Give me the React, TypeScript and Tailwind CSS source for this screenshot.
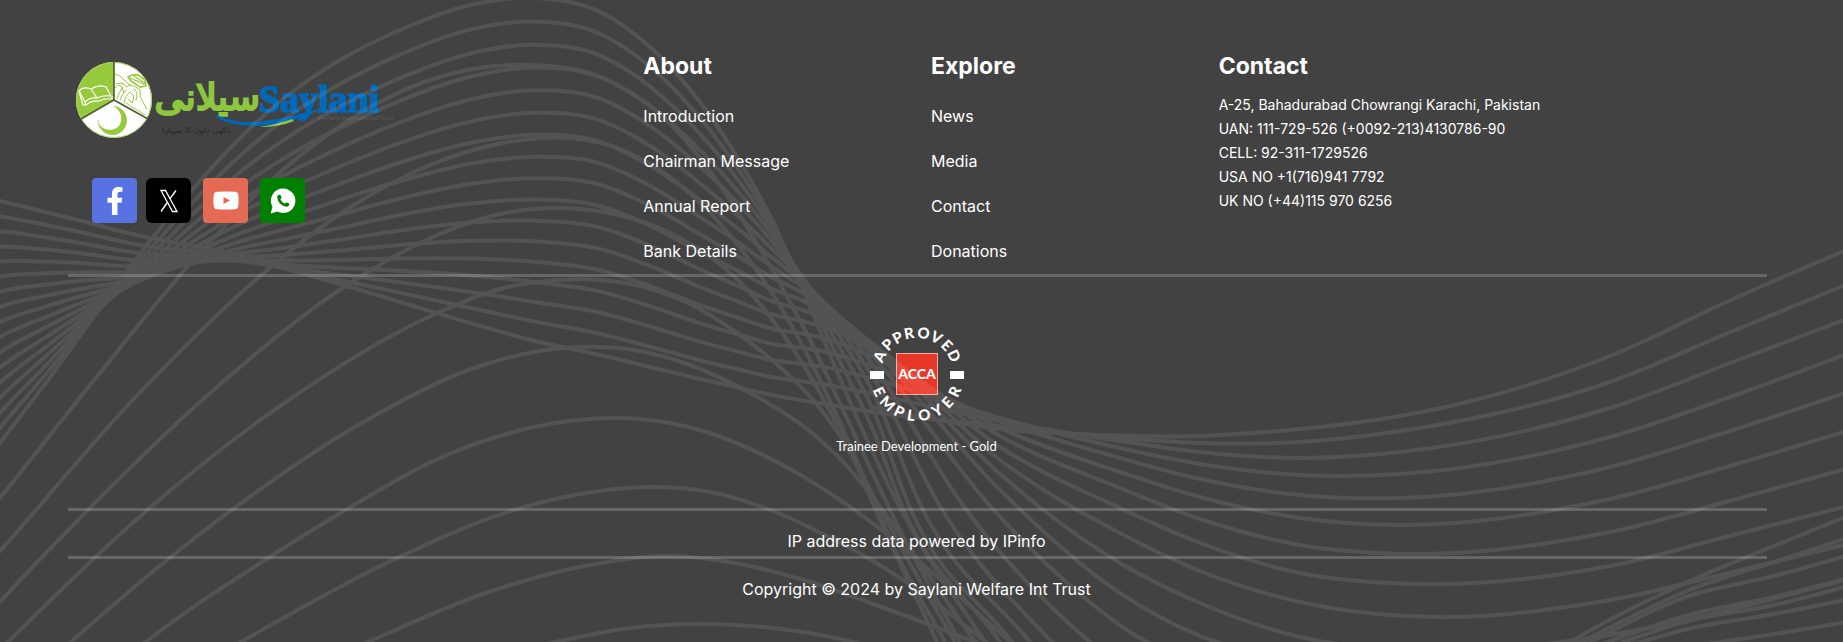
import React from "react";
import { FaFacebookF } from "react-icons/fa";

type Point = [number, number];

/** Smooth path through points ordered by x (cubic Hermite, parabolic slopes). */
function smooth(points: Point[]): string {
  const n = points.length;
  const secant = (i: number) => (points[i + 1][1] - points[i][1]) / (points[i + 1][0] - points[i][0]);
  const slopes = points.map((_, i) => {
    if (i === 0) return secant(0);
    if (i === n - 1) return secant(n - 2);
    const before = points[i][0] - points[i - 1][0];
    const after = points[i + 1][0] - points[i][0];
    return (secant(i - 1) * after + secant(i) * before) / (before + after);
  });
  let d = `M${points[0][0]} ${points[0][1]}`;
  for (let i = 0; i < n - 1; i++) {
    const [x1, y1] = points[i];
    const [x2, y2] = points[i + 1];
    const h = (x2 - x1) / 3;
    d += `C${(x1 + h).toFixed(1)} ${(y1 + slopes[i] * h).toFixed(1)} ${(x2 - h).toFixed(1)} ${(y2 - slopes[i + 1] * h).toFixed(1)} ${x2} ${y2.toFixed(1)}`;
  }
  return d;
}

/** x, value of the first strand, value of the last strand, bulge between them */
const stations: [number, number, number, number][] = [
  [-20, 470, 196, 0],
  [0, 443, 201, 0],
  [45, 384, 212, 35],
  [90, 322, 223, 85],
  [120, 281, 231, 120],
  [150, 241, 238, 148],
  [200, 181, 247, 165],
  [240, 138, 256, 178],
  [283, 99, 268, 185],
  [340, 60, 284, 170],
  [400, 30, 302, 130],
  [470, 5, 323, 80],
  [535, -2, 341, 35],
  [600, 12, 355, 5],
  [650, 47, 367, -5],
  [700, 102, 379, -25],
  [740, 162, 388, -70],
  [772, 220, 395, -120],
  [800, 283, 400, -200],
  [830, 355, 405, -280],
  [873, 453, 412, -350],
];

const tails: Point[][] = [
  [[900, 508], [985, 642], [1010, 680]],
  [[903, 508], [1000, 642], [1025, 680]],
  [[910, 508], [1012, 642], [1040, 680]],
  [[922, 508], [1030, 642], [1060, 680]],
  [[941, 508], [1052, 642], [1090, 680]],
  [[965, 508], [1090, 642], [1140, 680]],
  [[992, 508], [1130, 632], [1200, 670]],
  [[1000, 490], [1120, 593], [1200, 636], [1300, 662]],
  [[1000, 474], [1120, 563], [1200, 603], [1300, 637], [1400, 650], [1500, 648], [1610, 635], [1733, 609], [1860, 576]],
  [[1000, 460], [1120, 533], [1200, 571], [1300, 602], [1440, 617], [1610, 600], [1733, 572], [1860, 541]],
  [[1000, 447], [1120, 508], [1200, 543], [1300, 573], [1420, 584], [1610, 566], [1733, 535], [1860, 503]],
  [[1000, 436], [1120, 488], [1200, 519], [1300, 545], [1410, 554], [1610, 532], [1733, 500], [1860, 465]],
  [[1000, 428], [1120, 472], [1200, 497], [1300, 518], [1400, 525], [1610, 499], [1733, 465], [1860, 427]],
  [[1000, 421], [1120, 458], [1200, 479], [1300, 495], [1400, 498], [1610, 467], [1733, 430], [1860, 388]],
  [[1000, 418], [1120, 448], [1200, 464], [1300, 475], [1400, 474], [1610, 437], [1733, 396], [1860, 349]],
  [[1000, 421], [1120, 441], [1200, 452], [1300, 458], [1400, 452], [1610, 408], [1733, 362], [1860, 314]],
  [[1000, 426], [1120, 438], [1200, 443], [1300, 442], [1400, 431], [1610, 382], [1733, 331], [1860, 279]],
];

const strands: Point[][] = tails.map((tail, i) => {
  const u = i / (tails.length - 1);
  const head = stations.map(([x, a, b, c]): Point => [x, a + (b - a) * u + c * u * (1 - u)]);
  return [...head, ...tail];
});

const loose: Point[][] = [
  [[873, 407], [940, 420], [1000, 429], [1100, 435], [1200, 436], [1300, 429], [1400, 416], [1487, 397], [1610, 356], [1733, 299], [1860, 244]],
  [[-20, 523], [0, 498], [95, 379], [190, 264], [265, 186], [340, 126], [430, 80], [530, 65], [600, 77], [660, 114], [720, 185], [770, 266], [810, 340], [850, 425], [900, 530], [960, 642]],
  [[-20, 573], [0, 551], [130, 403], [265, 272], [340, 214], [430, 165], [514, 141], [570, 138], [620, 149], [679, 184], [738, 245], [780, 306], [820, 380], [860, 468], [895, 550], [945, 642]],
  [[-20, 624], [0, 602], [85, 513], [200, 402], [344, 287], [447, 231], [500, 214], [560, 208], [610, 213], [659, 228], [700, 250], [738, 280], [780, 330], [820, 393], [850, 451], [880, 520], [937, 642]],
  [[-10, 660], [8, 642], [152, 506], [280, 406], [435, 314], [500, 289], [560, 280], [600, 280], [640, 286], [690, 304], [730, 328], [773, 361], [813, 400], [840, 436], [870, 490], [907, 558], [955, 642]],
  [[50, 661], [71, 642], [237, 506], [360, 424], [486, 364], [540, 351], [600, 347], [640, 351], [690, 365], [750, 393], [807, 429], [847, 466], [880, 507], [930, 577], [975, 642]],
  [[130, 655], [146, 642], [265, 560], [344, 511], [440, 458], [534, 427], [590, 419], [640, 419], [700, 430], [773, 460], [840, 500], [880, 529], [935, 575], [1010, 642]],
  [[220, 654], [241, 642], [395, 559], [514, 510], [580, 494], [650, 487], [710, 492], [773, 511], [823, 534], [873, 561], [915, 588], [990, 645]],
  [[340, 654], [368, 642], [480, 595], [580, 567], [670, 556], [735, 563], [807, 581], [873, 604], [957, 635], [1000, 652]],
  [[520, 650], [560, 641], [630, 628], [700, 624], [773, 628], [840, 639], [900, 655]],
  [[1560, 648], [1600, 625], [1692, 580], [1774, 546], [1860, 511]],
  [[1565, 650], [1692, 589], [1774, 562], [1860, 534]],
  [[1570, 652], [1692, 595], [1774, 576], [1860, 552]],
  [[1590, 648], [1692, 614], [1774, 597], [1860, 575]],
  [[1600, 650], [1692, 620], [1774, 605], [1860, 583]],
  [[1620, 648], [1692, 628], [1774, 614], [1860, 597]],
  [[1680, 648], [1774, 634], [1860, 620]],
];

const wavePaths = [...strands, ...loose].map(smooth);

function Waves() {
  return (
    <svg
      className="pointer-events-none absolute inset-0 h-full w-full"
      viewBox="0 0 1843 642"
      preserveAspectRatio="none"
      aria-hidden="true"
    >
      <g fill="none" stroke="#fff" strokeWidth="4" opacity="0.09">
        {wavePaths.map((d, i) => (
          <path key={i} d={d} />
        ))}
      </g>
    </svg>
  );
}

function Logo() {
  return (
    <svg className="block h-[84px] w-[340px]" viewBox="68 58 340 84" role="img" aria-label="Saylani Welfare International Trust">
      <circle cx="114" cy="100" r="38" fill="#fff" />
      <path d="M114 100V62A38 38 0 0 0 81 119Z" fill="#96ca3c" />
      <circle cx="114" cy="100" r="37.5" fill="none" stroke="#a6cf66" />
      <path d="M114 61V100L81 119M114 100L148 119" fill="none" stroke="#4d5a35" strokeWidth="1.6" />
      <g fill="none" stroke="#fff" strokeWidth="1.2" strokeLinejoin="round">
        <path d="M79 91Q83 86 91 89Q99 84 106 87L111 96Q103 95 97 98Q90 97 85 102Z" />
        <path d="M79 91L83 105L86 105Q92 100 99 101Q105 98 112 99V96M85 102L86 105M91 89L97 98" />
      </g>
      <g fill="none" stroke="#96ca3c" strokeWidth="1" strokeLinecap="round">
        <path d="M115 74Q120 75 123 79L130 85L127 87L122 83M115 88Q119 83 122 87L124 93M117 99Q119 92 122 88M120 100Q122 94 126 90M124 103Q125 96 130 92M116 84Q120 82 124 84" />
        <path d="M129 85Q135 85 140 90Q139 98 144 104L147 109M126 103Q131 107 139 111L145 115M131 93Q136 96 132 103L128 99M134 89Q139 93 136 100" />
        <path d="M128 77Q133 74 138 75L145 80L146 86L140 87L131 81Z" strokeDasharray="1 1.4" strokeWidth="1.8" />
        <path d="M130 78L144 84M134 76L145 83" strokeDasharray="1 1.4" strokeWidth="1.4" />
      </g>
      <path d="M113 106A14.500 14.500 0 1 1 98 122A13 13 0 0 0 119 126A13.500 13.500 0 0 0 113 106Z" fill="#96ca3c" />
      <path d="M98 120A14 14 0 0 0 103 131" fill="none" stroke="#b9dd80" />
      <text
        x="260"
        y="110"
        direction="rtl"
        fill="#8dc63f"
        stroke="#8dc63f"
        strokeWidth="2.2"
        fontSize="37"
        fontFamily="'DejaVu Sans', sans-serif"
      >
        سیلانی
      </text>
      <path d="M217 115Q232 123 255 122Q280 120 311 111Q318 109 323 108Q300 121 270 125Q235 128 217 118Z" fill="#0068b8" />
      <path d="M259 127Q278 124 292 119L294 121Q280 127 259 127Z" fill="#8dc63f" />
      <text
        x="259"
        y="112"
        fill="#0068b8"
        stroke="#0068b8"
        strokeWidth="1.6"
        fontSize="38"
        fontWeight="700"
        fontFamily="'Liberation Serif', serif"
      >
        Saylani
      </text>
      <text x="318" y="120" fill="#5c5c5c" fontSize="6" fontFamily="'Open Sans', sans-serif">
        Welfare International Trust
      </text>
      <text x="230" y="133" direction="rtl" fill="#262626" fontSize="8" fontFamily="'DejaVu Sans', sans-serif">
        دکھی دلوں کا سہارا
      </text>
    </svg>
  );
}

function XIcon() {
  return (
    <svg className="h-[24px] w-[20px]" viewBox="0 0 20 24" fill="none" stroke="#fff" aria-hidden="true">
      <path d="M2 1.500H6.500L18 22.500H13.500Z" strokeWidth="1.3" />
      <path d="M17 1.500L10.800 9.800M8.700 13L2 22.500" strokeWidth="1.4" />
    </svg>
  );
}

function YoutubeIcon() {
  return (
    <svg className="h-[19px] w-[26px]" viewBox="0 0 26 19" aria-hidden="true">
      <path d="M4 .8Q13 0 22 .8Q25 1 25.300 4Q25.900 9.500 25.300 15Q25 18 22 18.200Q13 19 4 18.200Q1 18 .7 15Q.1 9.500 .7 4Q1 1 4 .8Z" fill="#fff" />
      <path d="M10.500 6L17 9.500L10.500 13Z" fill="#e46a54" />
    </svg>
  );
}

function WhatsappIcon() {
  return (
    <svg className="size-[26px]" viewBox="0 0 26 26" aria-hidden="true">
      <path d="M13.300 .6A12.200 12.200 0 1 1 7.500 23.600L.6 25.400L2.500 18.800A12.200 12.200 0 0 1 13.300 .6Z" fill="#fff" />
      <path
        transform="translate(6 5.500) scale(.6)"
        d="M13.832 16.568a1 1 0 0 0 1.213-.303l.355-.465A2 2 0 0 1 17 15l3 1a2 2 0 0 1 2 2v1a4 4 0 0 1-4 3A17 17 0 0 1 2 6a4 4 0 0 1 3-4h1a2 2 0 0 1 2 1.500l1 3a2 2 0 0 1-.8 2.100l-.468.351a1 1 0 0 0-.292 1.233 14 14 0 0 0 6.392 6.384Z"
        fill="#008000"
      />
    </svg>
  );
}

const approved: [string, number][] = [
  ["A", -65], ["P", -45], ["P", -28], ["R", -11], ["O", 9], ["V", 28], ["E", 46], ["D", 64],
];
const employer: [string, number][] = [
  ["E", 65], ["M", 45], ["P", 25], ["L", 8], ["O", -10], ["Y", -29], ["E", -47], ["R", -65],
];

function AccaBadge() {
  return (
    <svg className="block h-[100px] w-[100px]" viewBox="-50 -50 100 100" role="img" aria-label="ACCA Approved Employer">
      <g fill="#fff" fontFamily="Lato, sans-serif" fontSize="15" fontWeight="900" textAnchor="middle">
        {approved.map(([letter, angle], i) => (
          <text key={i} y="-36" transform={`rotate(${angle})`}>
            {letter}
          </text>
        ))}
        {employer.map(([letter, angle], i) => (
          <text key={i} y="47" transform={`rotate(${angle})`}>
            {letter}
          </text>
        ))}
      </g>
      <path d="M-47 -3H-33V5H-47ZM33 -3H47V5H33Z" fill="#fff" />
      <rect x="-20.500" y="-20.500" width="41" height="41" fill="#e73827" stroke="#f3a79f" />
      <text y="5" fill="#fff" fontSize="14" fontWeight="900" textAnchor="middle" fontFamily="Lato, sans-serif">
        ACCA
      </text>
    </svg>
  );
}

function LinkColumn({ title, links }: { title: string; links: string[] }) {
  return (
    <nav className="col-span-2 px-3" aria-label={title}>
      <h2 className="text-[23px] leading-8 font-bold">{title}</h2>
      <ul className="mt-[22px]">
        {links.map((label) => (
          <li key={label} className="pb-[21px] leading-6">
            <a href="#">{label}</a>
          </li>
        ))}
      </ul>
    </nav>
  );
}

const contactLines = [
  "A-25, Bahadurabad Chowrangi Karachi, Pakistan",
  "UAN: 111-729-526 (+0092-213)4130786-90",
  "CELL: 92-311-1729526",
  "USA NO +1(716)941 7792",
  "UK NO (+44)115 970 6256",
];

function Rule() {
  return <hr className="mr-[15px] ml-3 h-[3px] border-0 bg-white/20" />;
}

export default function App() {
  return (
    <footer className="relative min-h-screen overflow-hidden bg-[#424242] pt-[50px] pr-[61px] pb-10 pl-14 font-[Inter,sans-serif] text-base text-white">
      <div className="grid grid-cols-12">
        <div className="col-span-4 px-3 pt-2">
          <Logo />
          <div className="relative z-10 mt-9 ml-6 flex items-center gap-3">
            <div className="flex gap-[9px]">
              <a href="#" aria-label="Facebook" className="flex size-[45px] items-center justify-center rounded bg-[#5872e4]">
                <FaFacebookF size={28} />
              </a>
              <a href="#" aria-label="X" className="flex size-[45px] items-center justify-center rounded-md bg-black">
                <XIcon />
              </a>
            </div>
            <a href="#" aria-label="YouTube" className="flex size-[45px] items-center justify-center rounded bg-[#e46a54]">
              <YoutubeIcon />
            </a>
            <a href="#" aria-label="WhatsApp" className="flex size-[45px] items-center justify-center rounded bg-[#008000]">
              <WhatsappIcon />
            </a>
          </div>
        </div>
        <LinkColumn title="About" links={["Introduction", "Chairman Message", "Annual Report", "Bank Details"]} />
        <LinkColumn title="Explore" links={["News", "Media", "Contact", "Donations"]} />
        <section className="col-span-4 px-3">
          <h2 className="text-[23px] leading-8 font-bold">Contact</h2>
          <address className="mt-[11px] text-sm leading-6 not-italic">
            {contactLines.map((line) => (
              <p key={line}>{line}</p>
            ))}
          </address>
        </section>
      </div>

      <div className="-mt-2.5">
        <Rule />
      </div>
      <div className="flex h-[231px] flex-col items-center pt-[47px] pr-[5px]">
        <AccaBadge />
        <p className="mt-3 font-[Lato,sans-serif] text-[13px] leading-5">Trainee Development - Gold</p>
      </div>
      <Rule />
      <p className="h-[45px] pt-[18px] pr-[5px] text-center leading-6">IP address data powered by IPinfo</p>
      <Rule />
      <p className="pt-[18px] pr-[5px] text-center leading-6">Copyright © 2024 by Saylani Welfare Int Trust</p>
      <Waves />
    </footer>
  );
}
